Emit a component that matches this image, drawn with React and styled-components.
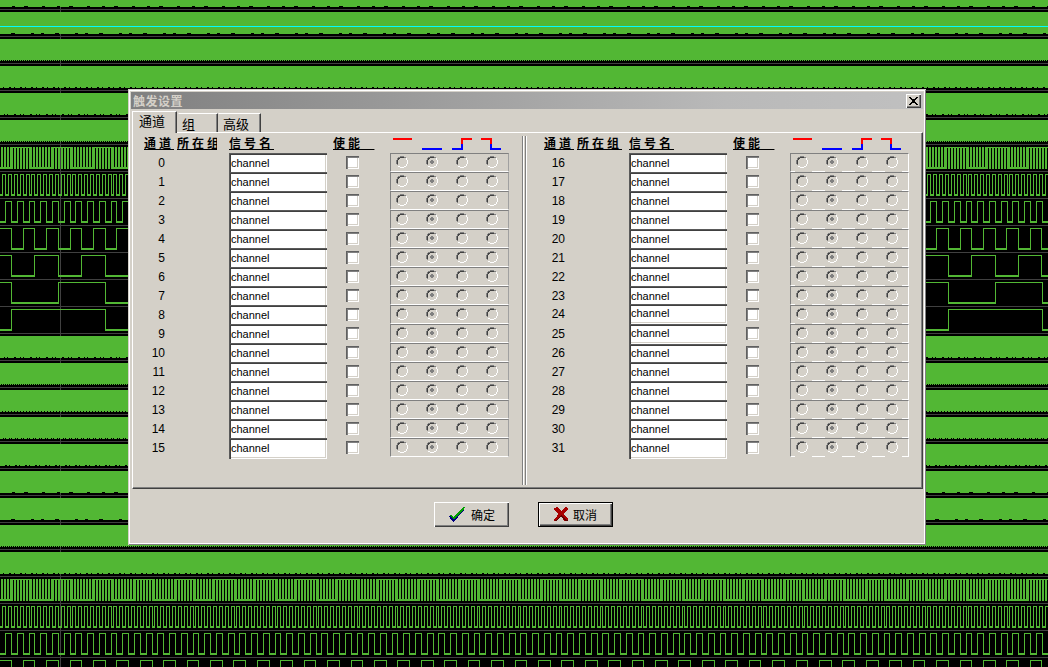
import React, { useMemo } from "react";
import styled, { createGlobalStyle } from "styled-components";

const FACE = "#d4d0c8";
const GREEN = "#52b734";
const CJK = `"Noto Sans CJK SC", "Liberation Sans", sans-serif`;
const LATIN = `"Liberation Sans", "Noto Sans CJK SC", sans-serif`;

const Global = createGlobalStyle`
  html, body { margin: 0; padding: 0; background: #000; overflow: hidden; }
`;

const Stage = styled.div`
  position: relative;
  width: 1048px;
  height: 667px;
  overflow: hidden;
  background: #000;
`;

const TraceSvg = styled.svg`
  display: block;
`;

/* ---------- logic-analyser traces behind the dialog ---------- */
const W = 1048;
const ORIGIN = 11;
const FINE = ["12 3 9 4 14 3", "11 4 16 3 7 3", "1 1", "3 1 5 2", "4 1 2 1 6 2", "1 1", "2 1", "3 1 1 1", "5 2 2 1"];
const PERIODS = {
  5: 1.464, 6: 2.928, 7: 5.856, 8: 11.71, 9: 23.42, 10: 46.85, 11: 93.7,
  21: 1.464, 22: 2.928, 23: 5.856, 24: 11.71,
};

function buildTrace(sep, T) {
  const invert = T > 90;
  const hi = [];
  const lo = [];
  const first = Math.floor((0 - ORIGIN) / T) - 1;
  const last = Math.ceil((W - ORIGIN) / T) + 1;
  for (let m = first; m <= last; m++) {
    const a = Math.round(ORIGIN + m * T);
    const b = Math.round(ORIGIN + (m + 1) * T);
    const odd = Math.abs(m) % 2 === 1;
    const high = invert ? !odd : odd;
    if (high) hi.push(`M${a} ${sep + 3.5}H${b + 1}`);
    else lo.push(`M${a} ${sep + 24}H${b + 1}`);
    hi.push(`M${b + 0.5} ${sep + 3}V${sep + 25}`);
  }
  return { hi: hi.join(""), lo: lo.join("") };
}

function Traces() {
  const rows = useMemo(() => {
    const out = [];
    for (let k = -1; k <= 24; k++) {
      const sep = 9 + 27 * k;
      const T = PERIODS[k];
      out.push({ k, sep, trace: T ? buildTrace(sep, T) : null });
    }
    return out;
  }, []);
  return (
    <TraceSvg width={W} height={667} viewBox={`0 0 ${W} 667`} shapeRendering="crispEdges">
      {rows.map((r) => (
        <path key={`s${r.k}`} d={`M0 ${r.sep + 0.5}H${W}`} stroke="#404040" />
      ))}
      <path d="M60.5 0V667" stroke="#404040" />
      {rows.map((r) =>
        r.trace ? (
          <g key={r.k} fill="none" stroke={GREEN}>
            <path d={r.trace.hi} />
            <path d={r.trace.lo} strokeWidth="2" />
          </g>
        ) : (
          <g key={r.k}>
            <rect x="0" y={Math.max(r.sep + 3, 0)} width={W} height={r.sep < 0 ? 6 : 21} fill={GREEN} />
            <path
              d={`M0 ${r.sep + 24.5}H${W}`}
              stroke={GREEN}
              strokeDasharray={FINE[(r.k + 1) % FINE.length]}
            />
          </g>
        )
      )}
      <path d={`M0 26.5H${W}`} stroke="#00ffff" />
    </TraceSvg>
  );
}

/* ---------- dialog window ---------- */
const Dialog = styled.div`
  position: absolute;
  left: 128px;
  top: 89px;
  width: 798px;
  height: 456px;
  box-sizing: border-box;
  padding: 3px;
  display: flex;
  flex-direction: column;
  background: ${FACE};
  box-shadow:
    inset 1px 1px 0 ${FACE},
    inset -1px -1px 0 #808080,
    inset 2px 2px 0 #fff,
    inset -2px -2px 0 #fff;
`;

const TitleBar = styled.div`
  height: 17px;
  flex: none;
  display: flex;
  align-items: center;
  justify-content: space-between;
  padding: 0 2px 0 2px;
  background: linear-gradient(90deg, #808080 0%, #b9b9b9 75%, #c0c0c0 100%);
`;

const TitleText = styled.span`
  font: bold 12px/17px ${CJK};
  letter-spacing: 0.5px;
  color: ${FACE};
`;

const CloseButton = styled.button`
  width: 15px;
  height: 14px;
  padding: 0;
  border: none;
  display: flex;
  align-items: center;
  justify-content: center;
  background: ${FACE};
  box-shadow:
    inset 1px 1px 0 #fff,
    inset -1px -1px 0 #404040,
    inset -2px -2px 0 #808080;
`;

const TabStrip = styled.div`
  height: 23px;
  flex: none;
  display: flex;
  align-items: flex-end;
  padding-left: 1px;
  position: relative;
  z-index: 1;
`;

const Tab = styled.div`
  box-sizing: border-box;
  width: ${(p) => p.$w}px;
  height: ${(p) => (p.$active ? 22 : 19)}px;
  margin-bottom: ${(p) => (p.$active ? -1 : 0)}px;
  margin-right: ${(p) => (p.$active ? 1 : 0)}px;
  padding-left: ${(p) => p.$pad}px;
  font: 13px/${(p) => (p.$active ? 18 : 20)}px ${CJK};
  color: #000;
  background: ${FACE};
  border-top: 1px solid #fff;
  border-left: 1px solid ${(p) => (p.$active ? "#fff" : FACE)};
  border-right: 1px solid #404040;
  box-shadow: inset -1px 0 0 #808080;
`;

const Pane = styled.div`
  box-sizing: border-box;
  flex: none;
  height: 357px;
  margin-left: 1px;
  padding: 0 0 0 11px;
  display: flex;
  border-top: 1px solid #fff;
  border-left: 1px solid #fff;
  border-right: 1px solid #404040;
  border-bottom: 1px solid #404040;
  box-shadow: inset -1px -1px 0 #808080;
`;

const Panel = styled.div`
  width: 365px;
  flex: none;
  display: flex;
  flex-direction: column;
`;

const Divider = styled.div`
  flex: none;
  width: 5px;
  height: 349px;
  margin: 3px 17px 0 13px;
  box-sizing: border-box;
  border-left: 1px solid #808080;
  border-right: 1px solid #fff;
  background: linear-gradient(90deg, #fff 0 1px, ${FACE} 1px 2px, #808080 2px 3px);
`;

const HeaderRow = styled.div`
  height: 20px;
  display: grid;
  grid-template-columns: 33px 52px 104px 57px 119px;
  align-items: start;
`;

const Heading = styled.span`
  display: block;
  width: ${(p) => (p.$clip ? `${p.$clip}px` : "auto")};
  overflow: hidden;
  white-space: pre;
  font: bold 12px/16px ${CJK};
  letter-spacing: 3px;
  margin-top: 2px;
  text-decoration: underline;
  color: #000;
`;

const EdgeSvg = styled.svg`
  display: block;
  margin-top: 5px;
`;

const ChannelGrid = styled.div`
  display: grid;
  grid-template-columns: 33px 52px 98px 63px 119px;
  grid-auto-rows: 19px;
`;

const Num = styled.span`
  font: 12px/19px ${LATIN};
  text-align: right;
  padding-right: 12px;
  color: #000;
  margin-top: ${(p) => p.$nudge}px;
`;

const GroupCell = styled.span``;

const NameInput = styled.input`
  box-sizing: border-box;
  width: 98px;
  height: ${(p) => (p.$nudge !== undefined ? 20 : 21)}px;
  margin: ${(p) => p.$nudge || 0}px 0 0 0;
  padding: 0 0 2px 2px;
  border: none;
  outline: none;
  font: 11px ${LATIN};
  color: #000;
  background: #fff;
  box-shadow:
    inset 1px 1px 0 #5a5a5a,
    inset 2px 2px 0 #404040,
    inset -1px -1px 0 #fff,
    inset -2px -2px 0 ${FACE};
`;

const CheckBox = styled.span`
  display: block;
  box-sizing: border-box;
  width: 13px;
  height: 13px;
  margin: 3px 0 0 19px;
  background: #fff;
  box-shadow:
    inset 1px 1px 0 #606060,
    inset 2px 2px 0 #808080,
    inset -1px -1px 0 #fff,
    inset -2px -2px 0 ${FACE};
`;

const RadioGroup = styled.div`
  box-sizing: border-box;
  height: 19px;
  display: flex;
  gap: 13px;
  padding-left: 4px;
  border-top: 1px solid #808080;
  border-left: 1px solid #808080;
  border-right: 1px solid ${(p) => (p.$broken ? "#fff" : "#a0a0a0")};
  border-bottom: 1px solid #fff;
`;

const RadioSlot = styled.span`
  display: block;
  width: 17px;
  height: ${(p) => (p.$broken ? 18 : 17)}px;
  padding: 2px 0 0 1px;
  box-sizing: border-box;
  background: ${FACE};
`;

const RadioSvg = styled.svg`
  display: block;
`;

const Footer = styled.div`
  flex: 1;
  display: flex;
  gap: 29px;
  padding: 13px 0 0 303px;
`;

const DlgButton = styled.button`
  box-sizing: border-box;
  width: 75px;
  height: 25px;
  padding: 0 0 0 ${(p) => (p.$default ? 16 : 15)}px;
  border: none;
  display: flex;
  align-items: center;
  gap: 4px;
  font: 12px ${CJK};
  color: #000;
  background: ${FACE};
  box-shadow: ${(p) =>
    p.$default
      ? `inset 0 0 0 1px #000, inset 2px 2px 0 #fff, inset -2px -2px 0 #404040, inset -3px -3px 0 #808080`
      : `inset 1px 1px 0 #fff, inset -1px -1px 0 #404040, inset -2px -2px 0 #808080`};
`;

/* ---------- drawings ---------- */
const CloseIcon = () => (
  <svg width="9" height="8" viewBox="0 0 9 8" shapeRendering="crispEdges">
    <path
      fill="#000"
      d="M0 0h2v1h1v1h3V1h1V0h2v1H8v1H7v1H6v2h1v1h1v1h1v1H7V7H6V6H3v1H2v1H0V7h1V6h1V5h1V3H2V2H1V1H0z"
    />
  </svg>
);

const EdgeGlyphs = () => (
  <EdgeSvg width="119" height="15" viewBox="0 0 119 15" shapeRendering="crispEdges">
    <rect x="3" y="0" width="19" height="2" fill="#ff0000" />
    <rect x="32" y="10" width="20" height="2" fill="#0000ff" />
    <rect x="62" y="10" width="11" height="2" fill="#0000ff" />
    <rect x="71" y="6" width="2" height="4" fill="#0000ff" />
    <rect x="71" y="0" width="2" height="6" fill="#ff0000" />
    <rect x="73" y="0" width="9" height="2" fill="#ff0000" />
    <rect x="91" y="0" width="11" height="2" fill="#ff0000" />
    <rect x="100" y="2" width="2" height="4" fill="#ff0000" />
    <rect x="100" y="6" width="2" height="6" fill="#0000ff" />
    <rect x="102" y="10" width="9" height="2" fill="#0000ff" />
  </EdgeSvg>
);

const Radio = ({ on }) => (
  <RadioSvg width="12" height="12" viewBox="0 0 12 12" shapeRendering="crispEdges">
    <path fill="#808080" d="M4 0h4v1H4zM2 1h2v1H2zM8 1h2v1H8zM1 2h1v2H1zM0 4h1v4H0zM1 8h1v1H1z" />
    <path fill="#404040" d="M4 1h4v1H4zM2 2h2v1H2zM2 3h1v1H2zM1 4h1v4H1z" />
    <path fill="#fff" d="M4 11h4v1H4zM2 10h2v1H2zM8 10h2v1H8zM10 8h1v2h-1zM11 4h1v4h-1zM10 2h1v2h-1z" />
    {on && <path fill="#808080" d="M5 4h2v1h1v2H7v1H5V7H4V5h1z" />}
  </RadioSvg>
);

const CheckIcon = () => (
  <svg width="18" height="18" viewBox="0 0 18 18" shapeRendering="crispEdges">
    <path fill="#000080" d="M0 10h2v1h1v1h1v1h1v-1h1v-1h1v-1h1V9h1V8h1V7h1V6h1V5h1V4h1V3h1v2h-1v1h-1v1h-1v1h-1v1h-1v1h-1v1H9v1H8v1H7v1H6v1H5v1H4v-1H3v-1H2v-1H1v-2H0z" />
    <path fill="#00a000" d="M1 9h2v1h1v1h1v-1h1V9h1V8h1V7h1V6h1V5h1V4h1V3h1V2h1V1h2v1h-1v2h-1v1h-1v1h-1v1h-1v1h-1v1H9v1H8v1H7v1H6v1H4v-1H3v-1H2v-1H1z" />
  </svg>
);

const CrossIcon = () => (
  <svg width="15" height="15" viewBox="0 0 15 15" shapeRendering="crispEdges">
    <path fill="#a80000" d="M0 1h2V0h2v1h1v1h1v1h1v1h1V3h1V2h1V1h1V0h2v1h1v2h-1v1h-1v1h-1v1h-1v2h1v1h1v1h1v1h1v2h-2v1h-2v-1h-1v-1H9v-1H8v-1H6v1H5v1H4v1H3v1H0v-2h1v-1h1v-1h1V8h1V6H3V5H2V4H1V3H0z" />
    <path fill="#600000" d="M7 8h1v1h1v1h1v1h1v1h1v1h2v1h-3v-1h-1v-1H9v-1H8v-1H6v1H5v1H4v1H3v1H1v-1h2v-1h1v-1h1v-1h1V9h1z" />
  </svg>
);

/* ---------- data-driven parts ---------- */
const EDGES = [0, 1, 2, 3];
const NUDGE = { 24: -1, 25: 0, 26: 1 };

const ChannelRow = ({ n, broken }) => (
  <>
    <Num $nudge={(NUDGE[n] === -1 ? -1 : 0) + 1}>{n}</Num>
    <GroupCell />
    <NameInput readOnly value="channel" $nudge={NUDGE[n]} />
    <CheckBox />
    <RadioGroup $broken={broken}>
      {EDGES.map((e) => (
        <RadioSlot key={e} $broken={broken}>
          <Radio on={e === 1} />
        </RadioSlot>
      ))}
    </RadioGroup>
  </>
);

const ChannelPanel = ({ start, clip, broken }) => (
  <Panel>
    <HeaderRow>
      <Heading>通道</Heading>
      <Heading $clip={clip}>所在组</Heading>
      <Heading>信号名</Heading>
      <Heading>{"使能  "}</Heading>
      <EdgeGlyphs />
    </HeaderRow>
    <ChannelGrid>
      {Array.from({ length: 16 }, (_, i) => (
        <ChannelRow key={i} n={start + i} broken={broken} />
      ))}
    </ChannelGrid>
  </Panel>
);

export default function App() {
  return (
    <Stage>
      <Global />
      <Traces />
      <Dialog>
        <TitleBar>
          <TitleText>触发设置</TitleText>
          <CloseButton aria-label="关闭">
            <CloseIcon />
          </CloseButton>
        </TitleBar>
        <TabStrip>
          <Tab $active $w={45} $pad={6}>通道</Tab>
          <Tab $w={40} $pad={3}>组</Tab>
          <Tab $w={43} $pad={4}>高级</Tab>
        </TabStrip>
        <Pane>
          <ChannelPanel start={0} clip={40} />
          <Divider />
          <ChannelPanel start={16} broken />
        </Pane>
        <Footer>
          <DlgButton>
            <CheckIcon />
            确定
          </DlgButton>
          <DlgButton $default>
            <CrossIcon />
            取消
          </DlgButton>
        </Footer>
      </Dialog>
    </Stage>
  );
}
